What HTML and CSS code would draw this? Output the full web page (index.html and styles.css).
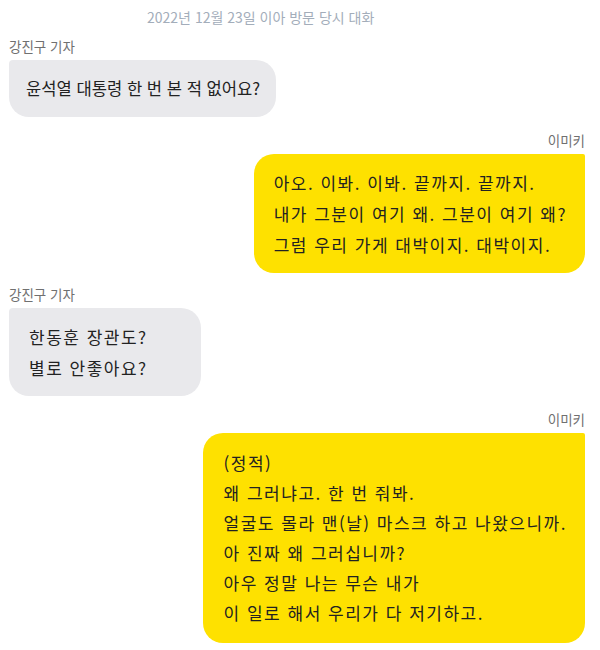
FILE: index.html
```html
<!DOCTYPE html>
<html lang="ko">
<head>
  <meta charset="UTF-8" />
  <meta name="viewport" content="width=device-width, initial-scale=1.0"/>
  <title>이아 방문 당시 대화</title>
  <link rel="stylesheet" href="styles.css">
</head>
<body>

<div class="chat">
  <div class="date">2022년 12월 23일 이아 방문 당시 대화</div>

  <div class="msg left first">
    <div class="name">강진구 기자</div>
    <div class="bubble">윤석열 대통령 한 번 본 적 없어요?</div>
  </div>

  <div class="msg right">
    <div class="name">이미키</div>
    <div class="bubble">아오. 이봐. 이봐. 끝까지. 끝까지.<br>내가 그분이 여기 왜. 그분이 여기 왜?<br>그럼 우리 가게 대박이지. 대박이지.</div>
  </div>

  <div class="msg left tight">
    <div class="name">강진구 기자</div>
    <div class="bubble short">한동훈 장관도?<br>별로 안좋아요?</div>
  </div>

  <div class="msg right">
    <div class="name">이미키</div>
    <div class="bubble long">(정적)<br>왜 그러냐고. 한 번 줘봐.<br>얼굴도 몰라 맨(날) 마스크 하고 나왔으니까.<br>아 진짜 왜 그러십니까?<br>아우 정말 나는 무슨 내가<br>이 일로 해서 우리가 다 저기하고.</div>
  </div>
</div>

</body>
</html>
```

FILE: styles.css
```css
* { box-sizing: border-box; }

body {
  margin: 0; background: #fff; color: #222;
  font-family: 'Noto Sans CJK KR', 'Noto Sans', sans-serif;
}

.chat {
  display: flex; flex-direction: column;
  padding: 6px 15px 0 9px;
}

.date {
  font-size: 14px; line-height: 22px; color: #a3adba;
  padding-left: 138px;
}

.msg {
  display: flex; flex-direction: column;
  margin-top: 13px;
}
.msg.first { margin-top: 8px; }
.msg.tight { margin-top: 11px; }

.name {
  font-size: 13.5px; line-height: 20px; color: #707070;
  margin-bottom: 4px;
}

.bubble {
  font-size: 17px; line-height: 31px;
}

.left { align-items: flex-start; }
.left .bubble {
  background: #e9e9ec;
  border-radius: 4px 20px 20px 20px;
  padding: 13px 16px 13px 17px;
  font-size: 16.6px;
}
.left .bubble.short {
  min-width: 192px; padding-left: 20px;
  font-size: 17px; letter-spacing: 1.5px;
}

.right { align-items: flex-end; }
.right .bubble {
  background: #fee100;
  border-radius: 20px 2px 20px 20px;
  padding: 13px 18px 13px 20px;
  letter-spacing: 1.5px;
}

.right .bubble.long { line-height: 30px; padding: 15px 18px 15px 21px; }
```
